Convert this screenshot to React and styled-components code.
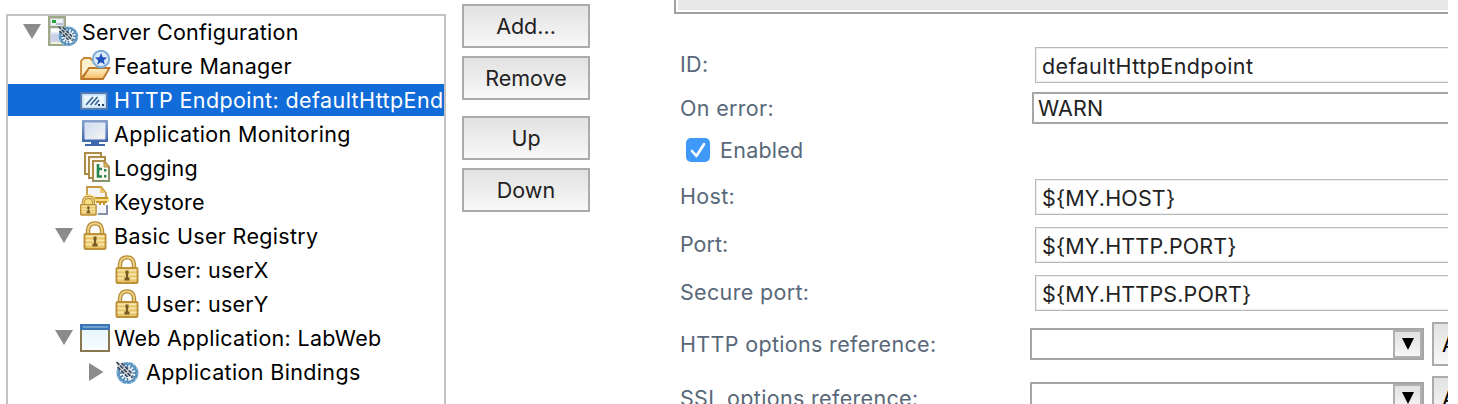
import React from 'react';
import styled, { createGlobalStyle } from 'styled-components';

const Global = createGlobalStyle`
  *, *::before, *::after { box-sizing: border-box; }
  body { margin: 0; background: #fff; overflow: hidden; font-family: Inter, "Liberation Sans", sans-serif; }
  button, input { font-family: inherit; }
`;

const Page = styled.main`
  display: flex;
  align-items: flex-start;
  width: 1458px;
  height: 404px;
  padding: 0 10px 0 6px;
  overflow: hidden;
  font-size: 21.5px;
  color: #000;
`;

const Tree = styled.ul`
  flex: none;
  width: 440px;
  height: 420px;
  margin: 14px 16px 0 0;
  padding: 0;
  border: 2px solid #c3c3c3;
  display: flex;
  flex-direction: column;
  gap: 2px;
  overflow: hidden;
  list-style: none;
`;

const TreeRow = styled.li`
  flex: none;
  display: flex;
  align-items: center;
  height: 32px;
  padding-left: ${(p) => 14 + p.$level * 32}px;
  background: ${(p) => (p.$selected ? '#116bd8' : 'transparent')};
  color: ${(p) => (p.$selected ? '#fff' : '#000')};
  white-space: nowrap;
`;

const Twisty = styled.span`
  flex: none;
  display: flex;
  width: 26px;
  height: 32px;
`;

const IconSlot = styled.span`
  flex: none;
  display: flex;
  width: 32px;
  height: 32px;
  margin-right: 2px;
`;

const Text = styled.span`
  letter-spacing: ${(p) => p.$track || 0}px;
  line-height: 32px;
  white-space: nowrap;
`;

const Actions = styled.div`
  flex: none;
  display: flex;
  flex-direction: column;
  gap: 8px;
  width: 128px;
  margin: 4px 84px 0 0;
`;

const PushButton = styled.button`
  flex: none;
  width: 128px;
  height: 44px;
  margin: ${(p) => (p.$spaced ? '8px' : '0')} 0 0;
  padding: 0;
  border: 2px solid #ababab;
  background: linear-gradient(#e2e2e2, #f8f8f8);
  color: ${(p) => (p.$start ? '#000' : '#222')};
  font-size: 21.5px;
  text-align: ${(p) => (p.$start ? 'left' : 'center')};
  text-indent: ${(p) => (p.$start ? '8px' : '0')};
  overflow: hidden;
`;

const Details = styled.section`
  flex: 1;
  min-width: 0;
  overflow: hidden;
`;

const Description = styled.div`
  height: 14px;
  padding: 0 0 2px 2px;
  border: solid #a0a0a0;
  border-width: 0 0 2px 2px;
  background: #e8e8e8 content-box;
`;

const Form = styled.form`
  display: flex;
  flex-direction: column;
  padding: 33px 0 0 6px;
`;

const FormRow = styled.div`
  flex: none;
  display: flex;
  align-items: center;
  height: ${(p) => p.$height}px;
  margin-top: ${(p) => p.$gap || 0}px;
`;

const Label = styled.label`
  flex: none;
  width: ${(p) => p.$width}px;
  padding-bottom: ${(p) => p.$lift || 0}px;
  color: #586879;
  letter-spacing: ${(p) => p.$track ?? 0.33}px;
  line-height: 28px;
  white-space: nowrap;
`;

const TextField = styled.input`
  flex: 1;
  min-width: 0;
  height: 36px;
  padding: 1px 0 0 6px;
  border: 1px solid #b9b9b9;
  border-right: 0;
  box-shadow: inset 1px 1px #eee, inset 0 -1px #eee;
  outline: 0;
  background: #fff;
  color: #222;
  font-size: 21.5px;
  letter-spacing: ${(p) => p.$track ?? 0.15}px;
`;

const SelectField = styled.div`
  flex: 1;
  height: 32px;
  padding-left: 4px;
  border: 2px solid #a6a6a6;
  border-right: 0;
  color: #222;
  line-height: 28px;
  letter-spacing: 0.1px;
`;

const CheckLabel = styled.label`
  display: flex;
  align-items: center;
  gap: 10px;
  padding-left: 6px;
  color: #586879;
  letter-spacing: 0.25px;
`;

const CheckMark = styled.span`
  display: flex;
  width: 24px;
  height: 24px;
  border-radius: 5px;
  background: #3f99f8;
`;

const Combo = styled.div`
  flex: none;
  display: flex;
  justify-content: flex-end;
  width: 394px;
  height: 32px;
  margin-right: 8px;
  border: 2px solid #a6a6a6;
`;

const ComboArrow = styled.span`
  display: flex;
  align-items: center;
  justify-content: center;
  width: 29px;
  height: 28px;
  border: 2px solid #b0b0b0;
  background: linear-gradient(#e2e2e2, #f6f6f6);
`;

function Chevron({ open }) {
  return (
    <svg width="26" height="32" viewBox="0 0 26 32">
      <path d={open ? 'M1 8H19L10 23Z' : 'M3 7V25L17.5 16Z'} fill="#8b8b8b" />
    </svg>
  );
}

function GearBurst() {
  const ticks = [0, 30, 60, 90, 120, 180, 210, 240, 270, 330];
  return (
    <g>
      <circle r="9.4" fill="#f6fafc" stroke="#5b96c3" strokeWidth="3" />
      <circle r="10.4" fill="none" stroke="#a9cbe2" strokeWidth="1.2" strokeDasharray="2 3.4" />
      {ticks.map((a) => (
        <path key={a} d="M0 -5V-8.5" transform={`rotate(${a})`} stroke="#4b7fa8" strokeWidth="1.6" />
      ))}
      <path d="M-11 -11L-4 -9L4 -1L5 5L-1 3L-9 -4Z" fill="#cfd6c6" />
      <path d="M-11 -11L5 5M-6 -10L4 0M-10 -6L0 4" stroke="#34436b" strokeWidth="1.7" strokeDasharray="4 1.2" />
    </g>
  );
}

function ServerIcon() {
  return (
    <svg width="32" height="32" viewBox="0 0 32 32">
      <path d="M1.2 1.2H16.8V28.8H1.2Z" fill="#e4e8f1" stroke="#9fa98a" strokeWidth="2.4" />
      <path d="M3 3H15V9H3Z" fill="#edf1f6" />
      <path d="M8 7H15V9H8Z" fill="#b3bedb" />
      <path d="M4 4H8V7H4Z" fill="#22a53a" />
      <path d="M2 11H16" stroke="#98a382" strokeWidth="2" />
      <path d="M3 13H15V16H3Z" fill="#fff" />
      <path d="M3 18H13V26H3Z" fill="#cbd1e6" />
      <path d="M3 27H15" stroke="#f4f2df" strokeWidth="2" />
      <g transform="translate(20.4 20.4) scale(.9)"><GearBurst /></g>
    </svg>
  );
}

function FeatureIcon() {
  return (
    <svg width="32" height="32" viewBox="0 0 32 32">
      <defs>
        <linearGradient id="folder" x2="0" y2="1"><stop stopColor="#fff2cb" /><stop offset="1" stopColor="#f3bd61" /></linearGradient>
      </defs>
      <path d="M1 28V11L4 8H10L13 11H22V18H10Z" fill="#fff0cd" stroke="#c98931" strokeWidth="1.8" />
      <path d="M9 18H29.5L23 29H2Z" fill="url(#folder)" stroke="#b9772b" strokeWidth="1.8" />
      <circle cx="21" cy="9" r="8.2" fill="#dceafa" stroke="#80add9" strokeWidth="2" />
      <path d="M21 3L22.7 7.2L27 7.5L23.8 10.4L24.8 14.6L21 12.3L17.2 14.6L18.2 10.4L15 7.5L19.3 7.2Z" fill="#1e52bd" />
    </svg>
  );
}

function EndpointIcon() {
  return (
    <svg width="32" height="32" viewBox="0 0 32 32">
      <path d="M1.2 9.2H26.8V24.8H1.2Z" fill="#e8f7fc" stroke="#557ab1" strokeWidth="2.2" />
      <path d="M3 11H25V23H3Z" fill="none" stroke="#c8e5f4" strokeWidth="1.5" />
      <path d="M6 21L13 13M10.5 21L17.5 13M15 21L19 16" stroke="#3f679d" strokeWidth="1.8" />
      <path d="M18 20H20V22H18ZM22 20H24V22H22Z" fill="#233e61" />
    </svg>
  );
}

function MonitorIcon() {
  return (
    <svg width="32" height="32" viewBox="0 0 32 32">
      <defs>
        <linearGradient id="bezel" x2="0" y2="1"><stop stopColor="#8aa2cd" /><stop offset="1" stopColor="#3f65ad" /></linearGradient>
        <linearGradient id="screen" x2="1" y2="1"><stop stopColor="#cddcf0" /><stop offset="1" stopColor="#f6f4f2" /></linearGradient>
      </defs>
      <path d="M2 2H28V24H2Z" fill="url(#bezel)" />
      <path d="M5 5H25V21H5Z" fill="url(#screen)" stroke="#dfe7f4" strokeWidth="1" />
      <path d="M11 24H19V26H25V28H5V26H11Z" fill="#3e66ad" />
    </svg>
  );
}

function LoggingIcon() {
  return (
    <svg width="32" height="32" viewBox="0 0 32 32">
      <g fill="#fffaf0" stroke="#ad8b49" strokeWidth="2">
        <path d="M5 1H21V22H5Z" />
        <path d="M9 5H25V26H9Z" />
        <path d="M13 9H24L29 15V29H13Z" />
      </g>
      <path d="M24 9V15H29Z" fill="#e8ba58" stroke="#ad8b49" />
      <path d="M18 12V24.5H22M18 17H22" fill="none" stroke="#268652" strokeWidth="2.6" />
      <path d="M24 17H26.4V19.4H24ZM24 23H26.4V25.4H24Z" fill="#268652" />
      <path d="M13 29H29V17" fill="none" stroke="#87936a" strokeWidth="2" />
    </svg>
  );
}

function LockShape() {
  return (
    <g>
      <path d="M4.5 14V9Q5 2 11.5 2T18.5 9V14" fill="none" stroke="#b58b34" strokeWidth="4.4" />
      <path d="M4.5 14V9Q5 2 11.5 2T18.5 9V14" fill="none" stroke="#efd58b" strokeWidth="1.8" />
      <rect x="1" y="12.5" width="21" height="15" rx="1" fill="#e9c66c" stroke="#bd9138" strokeWidth="2" />
      <path d="M2 15H21M2 19H21M2 23H21" stroke="#f8e7ac" strokeWidth="1.6" />
      <path d="M10 15H13V19H12.5V22H14V25H9V22H10.5V19H10Z" fill="#765923" />
    </g>
  );
}

function LockIcon() {
  return (
    <svg width="32" height="32" viewBox="0 0 32 32">
      <g transform="translate(3.5 1.4)"><LockShape /></g>
    </svg>
  );
}

function KeystoreIcon() {
  return (
    <svg width="32" height="32" viewBox="0 0 32 32">
      <path d="M8 1H21L27 7V28H8Z" fill="#f5f6fb" />
      <path d="M7 9V1H21L26 7V11" fill="none" stroke="#c4983c" strokeWidth="1.8" />
      <path d="M20 1V7H26Z" fill="#edc76c" />
      <path d="M18 28H27V19" fill="none" stroke="#858fa9" strokeWidth="2" />
      <path d="M4 10Q10 6 16 11H29V16H15L12 19H6L3 15Z" fill="#f8df84" />
      <path d="M15 12H28M16 16H27M20 17V19M24 17V19" stroke="#c99427" strokeWidth="2" />
      <g transform="translate(0 10) scale(.73 .69)">
        <LockShape />
      </g>
    </svg>
  );
}

function WindowIcon() {
  return (
    <svg width="32" height="32" viewBox="0 0 32 32">
      <defs><linearGradient id="pane" x2="0" y2="1"><stop stopColor="#e0f4fc" /><stop offset="1" stopColor="#fafdff" /></linearGradient></defs>
      <path d="M1 3H29V29H1Z" fill="url(#pane)" stroke="#87784f" strokeWidth="2" />
      <path d="M0 2H30V8H0Z" fill="#3a75b5" />
      <path d="M3 4H28V6H3Z" fill="#6ea1d0" />
    </svg>
  );
}

function BindingIcon() {
  return (
    <svg width="32" height="32" viewBox="0 0 32 32">
      <g transform="translate(15.5 17)"><GearBurst /></g>
    </svg>
  );
}

const nodes = [
  { text: 'Server Configuration', level: 0, icon: ServerIcon, open: true, track: 0.26 },
  { text: 'Feature Manager', level: 1, icon: FeatureIcon, track: 0.34 },
  { text: 'HTTP Endpoint: defaultHttpEnd', level: 1, icon: EndpointIcon, selected: true, track: 0.4 },
  { text: 'Application Monitoring', level: 1, icon: MonitorIcon, track: 0.33 },
  { text: 'Logging', level: 1, icon: LoggingIcon, track: 0.18 },
  { text: 'Keystore', level: 1, icon: KeystoreIcon, track: 0.2 },
  { text: 'Basic User Registry', level: 1, icon: LockIcon, open: true, track: 0.32 },
  { text: 'User: userX', level: 2, icon: LockIcon, track: 0.28 },
  { text: 'User: userY', level: 2, icon: LockIcon, track: 0.28 },
  { text: 'Web Application: LabWeb', level: 1, icon: WindowIcon, open: true, track: 0.32 },
  { text: 'Application Bindings', level: 2, icon: BindingIcon, open: false, track: 0.35 },
];

function ReferenceRow({ label, gap, track }) {
  return (
    <FormRow $height={44} $gap={gap}>
      <Label $width={350} $track={track}>{label}</Label>
      <Combo>
        <ComboArrow>
          <svg width="12" height="12" viewBox="0 0 12 12"><path d="M0 0H12L6 12Z" fill="#000" /></svg>
        </ComboArrow>
      </Combo>
      <PushButton type="button" $start>Add...</PushButton>
    </FormRow>
  );
}

export default function App() {
  return (
    <>
      <Global />
      <Page>
        <Tree>
          {nodes.map(({ text, level, icon: Icon, open, selected, track }) => (
            <TreeRow key={text} $level={level} $selected={selected}>
              <Twisty>{open !== undefined && <Chevron open={open} />}</Twisty>
              <IconSlot><Icon /></IconSlot>
              <Text $track={track}>{text}</Text>
            </TreeRow>
          ))}
        </Tree>
        <Actions>
          <PushButton>Add...</PushButton>
          <PushButton>Remove</PushButton>
          <PushButton $spaced>Up</PushButton>
          <PushButton>Down</PushButton>
        </Actions>
        <Details>
          <Description />
          <Form>
            <FormRow $height={36}>
              <Label $width={355} $lift={2}>ID:</Label>
              <TextField readOnly value="defaultHttpEndpoint" $track={0.42} />
            </FormRow>
            <FormRow $height={32} $gap={9}>
              <Label $width={352}>On error:</Label>
              <SelectField>WARN</SelectField>
            </FormRow>
            <FormRow $height={24} $gap={14}>
              <CheckLabel>
                <CheckMark>
                  <svg width="24" height="24" viewBox="0 0 24 24">
                    <path d="M6 13L10.4 18L18 6.2" fill="none" stroke="#fff" strokeWidth="2.6" strokeLinecap="round" strokeLinejoin="round" />
                  </svg>
                </CheckMark>
                Enabled
              </CheckLabel>
            </FormRow>
            <FormRow $height={36} $gap={17}>
              <Label $width={355} $lift={2}>Host:</Label>
              <TextField readOnly value="${MY.HOST}" />
            </FormRow>
            <FormRow $height={36} $gap={12}>
              <Label $width={355} $lift={2} $track={0}>Port:</Label>
              <TextField readOnly value="${MY.HTTP.PORT}" />
            </FormRow>
            <FormRow $height={36} $gap={12}>
              <Label $width={355} $lift={2}>Secure port:</Label>
              <TextField readOnly value="${MY.HTTPS.PORT}" />
            </FormRow>
            <ReferenceRow label="HTTP options reference:" gap={11} />
            <ReferenceRow label="SSL options reference:" gap={10} />
          </Form>
        </Details>
      </Page>
    </>
  );
}
